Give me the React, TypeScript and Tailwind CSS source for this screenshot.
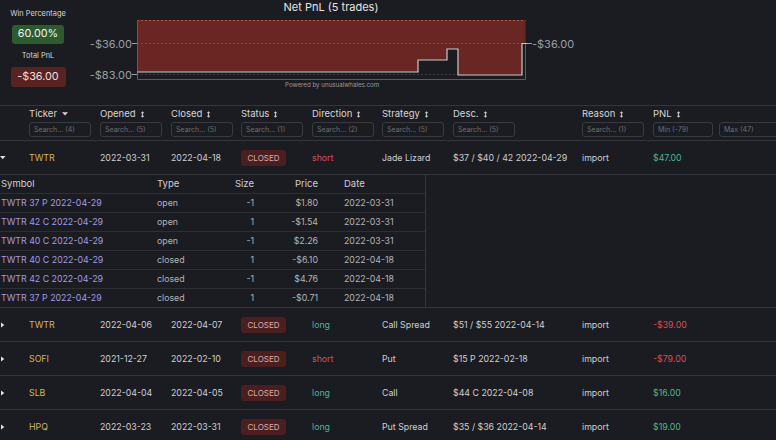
import React from "react";

type Trade = {
  ticker: string;
  opened: string;
  closed: string;
  direction: "long" | "short";
  strategy: string;
  desc: string;
  pnl: string;
};

const trades: Trade[] = [
  { ticker: "TWTR", opened: "2022-03-31", closed: "2022-04-18", direction: "short", strategy: "Jade Lizard", desc: "$37 / $40 / 42 2022-04-29", pnl: "$47.00" },
  { ticker: "TWTR", opened: "2022-04-06", closed: "2022-04-07", direction: "long", strategy: "Call Spread", desc: "$51 / $55 2022-04-14", pnl: "-$39.00" },
  { ticker: "SOFI", opened: "2021-12-27", closed: "2022-02-10", direction: "short", strategy: "Put", desc: "$15 P 2022-02-18", pnl: "-$79.00" },
  { ticker: "SLB", opened: "2022-04-04", closed: "2022-04-05", direction: "long", strategy: "Call", desc: "$44 C 2022-04-08", pnl: "$16.00" },
  { ticker: "HPQ", opened: "2022-03-23", closed: "2022-03-31", direction: "long", strategy: "Put Spread", desc: "$35 / $36 2022-04-14", pnl: "$19.00" },
];

const legs = [
  ["TWTR 37 P 2022-04-29", "open", "-1", "$1.80", "2022-03-31"],
  ["TWTR 42 C 2022-04-29", "open", "1", "-$1.54", "2022-03-31"],
  ["TWTR 40 C 2022-04-29", "open", "-1", "$2.26", "2022-03-31"],
  ["TWTR 40 C 2022-04-29", "closed", "1", "-$6.10", "2022-04-18"],
  ["TWTR 42 C 2022-04-29", "closed", "-1", "$4.76", "2022-04-18"],
  ["TWTR 37 P 2022-04-29", "closed", "1", "-$0.71", "2022-04-18"],
];

const cols = "grid grid-cols-[29px_71px_71px_70px_71px_70px_71px_129px_71px_1fr]";

function SortIcon() {
  return (
    <svg width="5" height="7" viewBox="0 0 5 7" className="ml-[4px] inline-block">
      <path d="M2.5 0.3L4.3 2.3H0.7Z M2.5 6.7L0.7 4.7H4.3Z" fill="#cfcfcf" />
      <path d="M2.5 2V5" stroke="#cfcfcf" strokeWidth="0.9" />
    </svg>
  );
}

function Caret() {
  return (
    <svg width="6" height="4" viewBox="0 0 6 4" className="ml-[5px] inline-block">
      <path d="M0 0.3H6L3 3.6Z" fill="#d8d8d8" />
    </svg>
  );
}

function Search({ text, w = "w-[62px]" }: { text: string; w?: string }) {
  return (
    <input
      readOnly
      placeholder={text}
      className={`${w} mt-[1px] block h-[15px] rounded-[3px] border border-[#3a3b41] bg-transparent pl-[4px] text-[7px] outline-none placeholder:text-[#6c6d73]`}
    />
  );
}

function Head({ label, ph, caret }: { label: string; ph: string; caret?: boolean }) {
  return (
    <div>
      <div className="flex h-[14px] items-center text-[9.5px] text-[#d6d6d6]">
        {label}
        {caret ? <Caret /> : <SortIcon />}
      </div>
      <Search text={ph} />
    </div>
  );
}

function Chart() {
  return (
    <svg width="700" height="105" viewBox="76 0 700 105" className="block">
      <text x="331" y="11" textAnchor="middle" fontSize="11" fill="#e4e4e6">
        Net PnL (5 trades)
      </text>
      <path
        d="M137 20H525.5V43.5H522V75H458V49H447V60H418V72H137Z"
        fill="#6a2622"
      />
      <path d="M137 20.5H525.5" stroke="#b05a52" strokeDasharray="2 2" strokeWidth="1" />
      <path d="M137 43.5H522" stroke="#ffffff" strokeOpacity="0.18" strokeDasharray="2 2" />
      <path d="M137 74.5H458" stroke="#ffffff" strokeOpacity="0.14" strokeDasharray="2 2" />
      <path d="M137.5 20V79.5H525.5V43.5" stroke="#5c5d63" fill="none" />
      <path
        d="M137 72H418V60H447V49H458V75H522V43.5H527"
        stroke="#c9c9cc"
        strokeWidth="1.2"
        fill="none"
      />
      <path d="M132 43.5H137 M132 74.5H137 M527 43.5H532" stroke="#9c9ea3" />
      <text x="132" y="47.5" textAnchor="end" fontSize="11" fill="#9c9ea3">-$36.00</text>
      <text x="132" y="78.5" textAnchor="end" fontSize="11" fill="#9c9ea3">-$83.00</text>
      <text x="532" y="47.5" fontSize="11" fill="#9c9ea3">-$36.00</text>
      <text x="285" y="86.5" fontSize="6.2" fill="#9a9ba0">Powered by unusualwhales.com</text>
    </svg>
  );
}

function TradeRow({ t, open }: { t: Trade; open?: boolean }) {
  const neg = t.pnl.startsWith("-");
  return (
    <div className={`${cols} h-[34px] items-center whitespace-nowrap border-b border-[#35363b] text-[8.8px] text-[#cfcfd1]`}>
      <div>
        {open ? (
          <svg width="6" height="4" viewBox="0 0 6 4" className="block">
            <path d="M0 0H5.5L2.75 3.3Z" fill="#e0e0e0" />
          </svg>
        ) : (
          <svg width="5" height="6" viewBox="0 0 5 6" className="ml-[1px] block">
            <path d="M0 0.5L3.3 3L0 5.5Z" fill="#e0e0e0" />
          </svg>
        )}
      </div>
      <div className="text-[#d4b45c]">{t.ticker}</div>
      <div>{t.opened}</div>
      <div>{t.closed}</div>
      <div>
        <span className="inline-flex h-[16px] w-[45px] items-center justify-center rounded-[3px] bg-[#4b1e1f] text-[8px] text-[#d9aeae]">
          CLOSED
        </span>
      </div>
      <div className={t.direction === "short" ? "text-[#d94f5f]" : "text-[#4cb58c]"}>{t.direction}</div>
      <div>{t.strategy}</div>
      <div>{t.desc}</div>
      <div>import</div>
      <div className={neg ? "text-[#d94f5f]" : "text-[#4cb58c]"}>{t.pnl}</div>
    </div>
  );
}

const legCols = "grid grid-cols-[157px_60px_37px_64px_1fr] items-center whitespace-nowrap";

export default function App() {
  return (
    <div className="h-[440px] w-[776px] overflow-hidden bg-[#1b1c21] font-[family-name:Inter,sans-serif] text-[#d0d0d0]">
      {/* Top: stats + chart */}
      <div className="flex h-[105px]">
        <div className="flex w-[76px] flex-col items-center pt-[9px]">
          <div className="h-[10px] text-[7.4px] leading-[10px] text-[#d6d6d8]">Win Percentage</div>
          <div className="mt-[6px] flex h-[19px] w-[52px] items-center justify-center rounded-[3px] bg-[#2e5a30] text-[10.8px] text-[#eef3ee]">
            60.00%
          </div>
          <div className="mt-[7px] h-[10px] text-[7.4px] leading-[10px] text-[#d6d6d8]">Total PnL</div>
          <div className="mt-[6px] flex h-[20px] w-[55px] items-center justify-center rounded-[3px] bg-[#592321] text-[10.8px] text-[#f2dede]">
            -$36.00
          </div>
        </div>
        <Chart />
      </div>

      {/* Table header */}
      <div className={`${cols} border-y border-[#35363b] pt-[1px] pb-[3px]`}>
        <div />
        <Head label="Ticker" ph="Search... (4)" caret />
        <Head label="Opened" ph="Search... (5)" />
        <Head label="Closed" ph="Search... (5)" />
        <Head label="Status" ph="Search... (1)" />
        <Head label="Direction" ph="Search... (2)" />
        <Head label="Strategy" ph="Search... (5)" />
        <Head label="Desc." ph="Search... (5)" />
        <Head label="Reason" ph="Search... (1)" />
        <div>
          <div className="flex h-[14px] items-center text-[9.5px] text-[#d6d6d6]">
            PNL
            <SortIcon />
          </div>
          <div className="flex gap-[6px]">
            <Search text="Min (-79)" w="w-[60px]" />
            <Search text="Max (47)" w="w-[62px] shrink-0" />
          </div>
        </div>
      </div>

      <TradeRow t={trades[0]} open />

      {/* Expanded legs */}
      <div className="border-b border-[#35363b]">
        <div className="w-[426px] border-r border-[#35363b] text-[8.8px] text-[#b4b4b8]">
          <div className={`${legCols} h-[19px] border-b border-[#2e2f34] text-[9.5px] text-[#cfcfd1]`}>
            <div className="pl-[1px]">Symbol</div>
            <div>Type</div>
            <div className="text-right">Size</div>
            <div className="text-right">Price</div>
            <div className="pl-[26px]">Date</div>
          </div>
          {legs.map((l, i) => (
            <div
              key={i}
              className={`${legCols} ${i < legs.length - 1 ? "h-[19px] border-b border-[#2e2f34]" : "h-[18px]"}`}
            >
              <div className="pl-[1px] text-[#a39be0]">{l[0]}</div>
              <div>{l[1]}</div>
              <div className="text-right">{l[2]}</div>
              <div className="text-right">{l[3]}</div>
              <div className="pl-[26px]">{l[4]}</div>
            </div>
          ))}
        </div>
      </div>

      {trades.slice(1).map((t, i) => (
        <TradeRow key={i} t={t} />
      ))}
    </div>
  );
}
